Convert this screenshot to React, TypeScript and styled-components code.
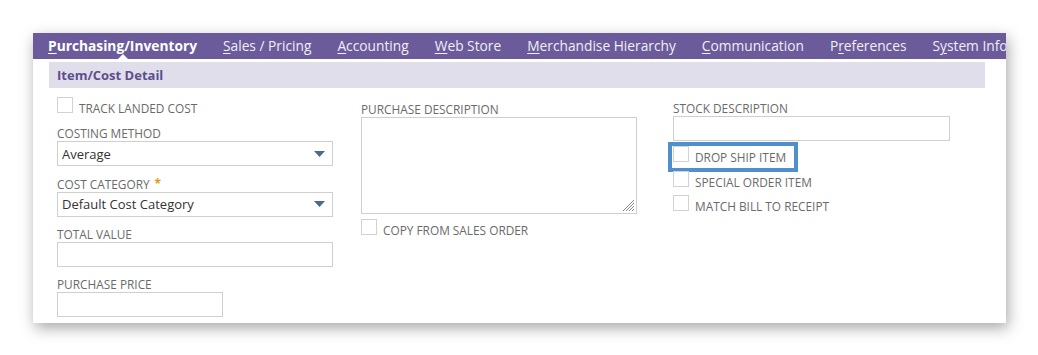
import React from "react";
import styled, { createGlobalStyle } from "styled-components";

const Global = createGlobalStyle`
  html, body { margin: 0; padding: 0; background: #ffffff; }
  body { font-family: "Open Sans", "Liberation Sans", sans-serif; }
  * { box-sizing: border-box; }
`;

const Page = styled.div`
  width: 1038px;
  height: 355px;
  padding: 33px 0 0 33px;
  overflow: hidden;
`;

const Card = styled.div`
  width: 973px;
  height: 290px;
  background: #ffffff;
  box-shadow: 2px 5px 14px rgba(0, 0, 0, 0.35);
  overflow: hidden;
  display: flex;
  flex-direction: column;
`;

const TabBar = styled.div`
  height: 26px;
  flex: none;
  background: #6b5b9b;
  display: flex;
  align-items: stretch;
  gap: 26px;
  padding-left: 15px;
  white-space: nowrap;
  overflow: hidden;
`;

const Tab = styled.div<{ $active?: boolean }>`
  position: relative;
  flex: none;
  line-height: 26px;
  font-size: 13.75px;
  font-weight: ${(p) => (p.$active ? 700 : 400)};
  color: ${(p) => (p.$active ? "#ffffff" : "#f0eef7")};
  u { text-decoration-thickness: 1px; text-underline-offset: 2px; }
`;

const Notch = styled.span`
  position: absolute;
  left: 70px;
  bottom: 0;
  width: 0;
  height: 0;
  border-left: 5px solid transparent;
  border-right: 5px solid transparent;
  border-bottom: 5px solid #ffffff;
`;

const Section = styled.div`
  margin: 3px 21px 0 16px;
`;

const SectionHeader = styled.div`
  height: 26px;
  background: #e1deec;
  padding-left: 8px;
  line-height: 26px;
  font-size: 13px;
  font-weight: 700;
  color: #5d4e8c;
`;

const Grid = styled.div`
  display: grid;
  grid-template-columns: 304px 312px 277px;
  padding: 8px 0 0 8px;
`;

const Column = styled.div`
  display: flex;
  flex-direction: column;
`;

const Field = styled.div<{ $mt?: number }>`
  display: flex;
  flex-direction: column;
  margin-top: ${(p) => p.$mt ?? 0}px;
`;

const Label = styled.div`
  height: 17px;
  line-height: 19px;
  font-size: 11.85px;
  color: #6a6a6a;
  white-space: nowrap;
`;

const Req = styled.span`
  color: #e29a12;
  font-weight: 700;
  margin-left: 5px;
  position: relative;
  top: -1px;
`;

const Select = styled.div<{ $w?: number }>`
  width: ${(p) => p.$w ?? 276}px;
  height: 25px;
  border: 1px solid #cfcfcf;
  display: flex;
  align-items: center;
  justify-content: space-between;
  padding: 0 7px 0 4px;
  font-size: 13px;
  color: #333333;
`;

const Input = styled.div<{ $w?: number }>`
  width: ${(p) => p.$w ?? 276}px;
  height: 25px;
  border: 1px solid #cfcfcf;
  background: #ffffff;
`;

const TextAreaBox = styled.div`
  position: relative;
  width: 276px;
  height: 97px;
  border: 1px solid #cfcfcf;
`;

const Grip = styled.svg`
  position: absolute;
  right: 1px;
  bottom: 1px;
`;

const CheckList = styled.div<{ $mt?: number }>`
  display: flex;
  flex-direction: column;
  gap: 8.7px;
  margin-top: ${(p) => p.$mt ?? 0}px;
`;

const CheckRow = styled.div<{ $mt?: number }>`
  position: relative;
  display: flex;
  align-items: flex-end;
  gap: 6px;
  height: 16px;
  margin-top: ${(p) => p.$mt ?? 0}px;
`;

const Box = styled.span`
  width: 16px;
  height: 16px;
  flex: none;
  border: 1px solid #d2d2d2;
  background: #ffffff;
`;

const CheckText = styled.span`
  font-size: 11.85px;
  line-height: 13px;
  color: #6a6a6a;
  white-space: nowrap;
  position: relative;
  top: 2px;
`;

const Highlight = styled.span`
  position: absolute;
  left: -5px;
  top: -4px;
  width: 130px;
  height: 30px;
  border: 4px solid #4f8fcb;
  pointer-events: none;
`;

const Arrow = () => (
  <svg width="11" height="6" viewBox="0 0 11 6">
    <path d="M0 0 H11 L5.5 6 Z" fill="#4b6a91" />
  </svg>
);

const Check = ({ label, mt, highlight }: { label: string; mt?: number; highlight?: boolean }) => (
  <CheckRow $mt={mt}>
    <Box />
    <CheckText>{label}</CheckText>
    {highlight && <Highlight />}
  </CheckRow>
);

const tabs: { pre: string; key: string; post: string; active?: boolean }[] = [
  { pre: "", key: "P", post: "urchasing/Inventory", active: true },
  { pre: "", key: "S", post: "ales / Pricing" },
  { pre: "", key: "A", post: "ccounting" },
  { pre: "", key: "W", post: "eb Store" },
  { pre: "", key: "M", post: "erchandise Hierarchy" },
  { pre: "", key: "C", post: "ommunication" },
  { pre: "P", key: "r", post: "eferences" },
  { pre: "S", key: "y", post: "stem Info" },
];

export default function App() {
  return (
    <>
      <Global />
      <Page>
        <Card>
          <TabBar>
            {tabs.map((t) => (
              <Tab key={t.post} $active={t.active}>
                {t.pre}
                <u>{t.key}</u>
                {t.post}
                {t.active && <Notch />}
              </Tab>
            ))}
          </TabBar>
          <Section>
            <SectionHeader>Item/Cost Detail</SectionHeader>
            <Grid>
              <Column>
                <Check label="TRACK LANDED COST" mt={1} />
                <Field $mt={11}>
                  <Label>COSTING METHOD</Label>
                  <Select>
                    Average
                    <Arrow />
                  </Select>
                </Field>
                <Field $mt={8.5}>
                  <Label>
                    COST CATEGORY<Req>*</Req>
                  </Label>
                  <Select>
                    Default Cost Category
                    <Arrow />
                  </Select>
                </Field>
                <Field $mt={8.5}>
                  <Label>TOTAL VALUE</Label>
                  <Input />
                </Field>
                <Field $mt={8}>
                  <Label>PURCHASE PRICE</Label>
                  <Input $w={166} />
                </Field>
              </Column>
              <Column>
                <Field $mt={4}>
                  <Label>PURCHASE DESCRIPTION</Label>
                  <TextAreaBox>
                    <Grip width="13" height="13" viewBox="0 0 13 13">
                      <g stroke="#8a8a8a" strokeWidth="1">
                        <line x1="12" y1="1" x2="1" y2="12" />
                        <line x1="12" y1="4" x2="4" y2="12" />
                        <line x1="12" y1="7" x2="7" y2="12" />
                        <line x1="12" y1="10" x2="10" y2="12" />
                      </g>
                    </Grip>
                  </TextAreaBox>
                </Field>
                <Check label="COPY FROM SALES ORDER" mt={5} />
              </Column>
              <Column>
                <Field $mt={3}>
                  <Label>STOCK DESCRIPTION</Label>
                  <Input $w={277} />
                </Field>
                <CheckList $mt={5}>
                  <Check label="DROP SHIP ITEM" highlight />
                  <Check label="SPECIAL ORDER ITEM" />
                  <Check label="MATCH BILL TO RECEIPT" />
                </CheckList>
              </Column>
            </Grid>
          </Section>
        </Card>
      </Page>
    </>
  );
}
